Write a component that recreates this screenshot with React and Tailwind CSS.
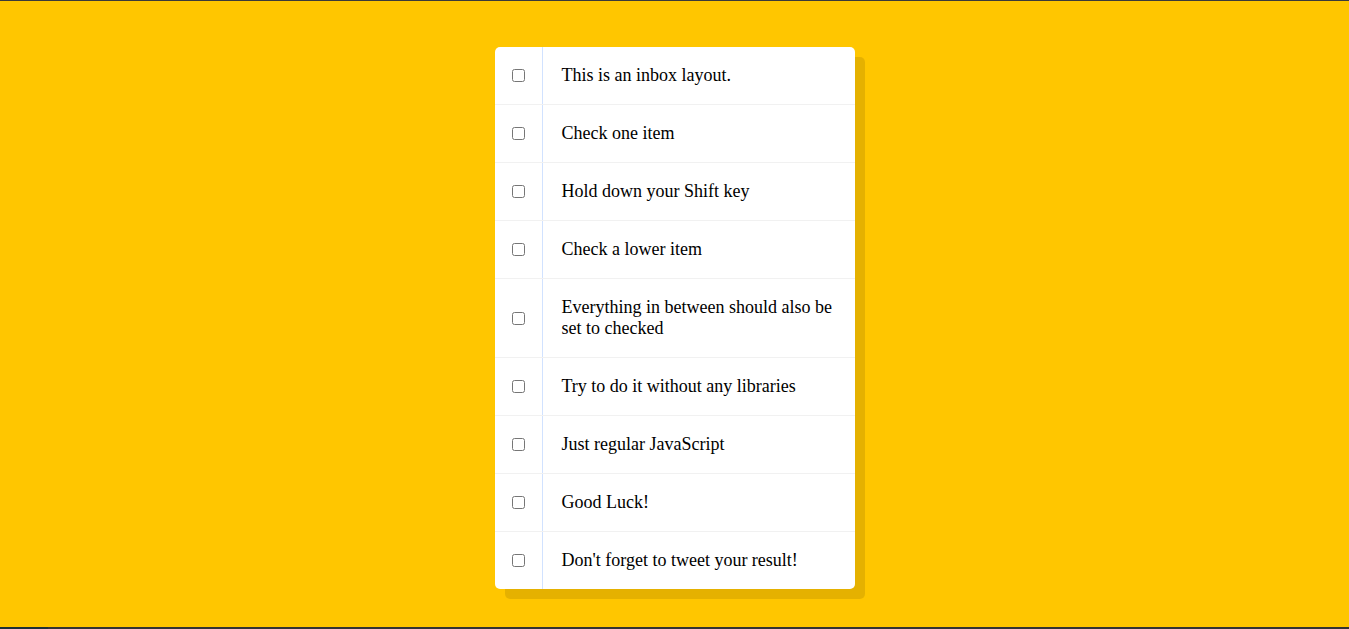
import React from "react";

const items = [
  "This is an inbox layout.",
  "Check one item",
  "Hold down your Shift key",
  "Check a lower item",
  "Everything in between should also be set to checked",
  "Try to do it without any libraries",
  "Just regular JavaScript",
  "Good Luck!",
  "Don't forget to tweet your result!",
];

export default function App() {
  return (
    <div className="h-[629px] w-full flex flex-col bg-[#ffc600] overflow-hidden">
      <div className="h-[1px] bg-[#3a3a3a] shrink-0" />
      <div className="flex-1 flex justify-center pt-[46px]">
        <div className="w-[360px] h-fit bg-white rounded-[5px] shadow-[10px_10px_0_rgba(0,0,0,0.1)]">
          {items.map((t, i) => (
            <div
              key={i}
              className={`flex items-center ${i < items.length - 1 ? "border-b border-[#f1f1f1]" : ""}`}
            >
              <div className="w-[47px] shrink-0 flex justify-center pl-[1px]">
                <input type="checkbox" className="m-0 w-[13px] h-[13px]" />
              </div>
              <p
                className="flex-1 m-0 border-l border-[#d1e2ff] pl-[19px] pr-[18px] py-[18px] text-[18px] leading-[21px] text-black"
                style={{ fontFamily: '"Liberation Serif", "Times New Roman", serif' }}
              >
                {t}
              </p>
            </div>
          ))}
        </div>
      </div>
      <div className="h-[2px] shrink-0 flex">
        <div className="w-[48px] bg-[#1d2f36]" />
        <div className="flex-1 bg-[#333333]" />
      </div>
    </div>
  );
}
